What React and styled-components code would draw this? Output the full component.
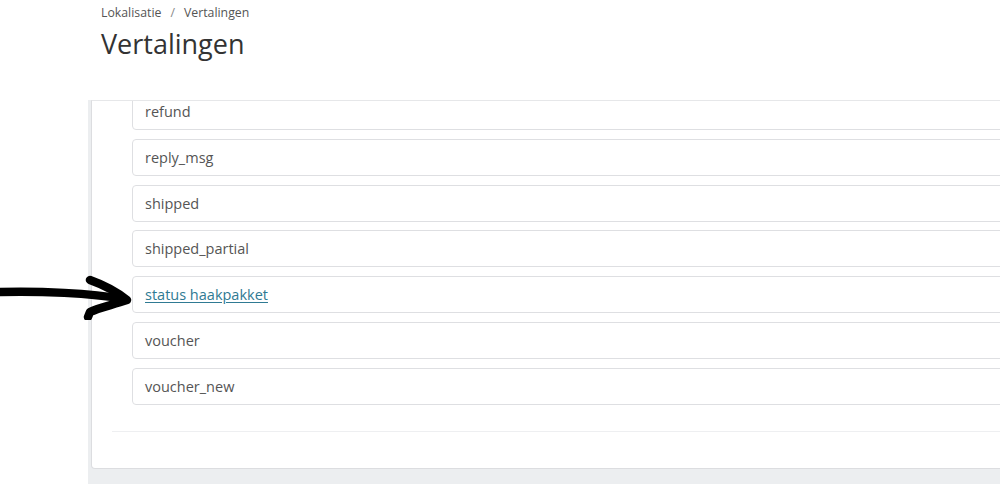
import React from 'react';
import styled, { createGlobalStyle } from 'styled-components';

const Global = createGlobalStyle`
    html, body {
        margin: 0;
        padding: 0;
        background: #ffffff;
        font-family: "Open Sans", "Liberation Sans", sans-serif;
        overflow: hidden;
    }
`;

const keys = ['refund', 'reply_msg', 'shipped', 'shipped_partial', 'status haakpakket', 'voucher', 'voucher_new'];
const linked = 'status haakpakket';

const App = () =>{
    return(
        <Page>
            <Global />
            <Header>
                <Crumbs>
                    <Crumb>Lokalisatie</Crumb>
                    <Sep>/</Sep>
                    <Crumb>Vertalingen</Crumb>
                </Crumbs>
                <Title>Vertalingen</Title>
            </Header>
            <Content>
                <Sidebar />
                <Main>
                    <Card>
                        <List>
                            {keys.map(k => (
                                <Row key={k}>
                                    {k === linked ? <KeyLink href="#">{k}</KeyLink> : k}
                                </Row>
                            ))}
                        </List>
                        <Divider />
                    </Card>
                </Main>
            </Content>
            <Arrow viewBox="0 0 135 50" width="135" height="50">
                <path d="M0 22 C40 21 90 23 124 29" fill="none" stroke="#000" strokeWidth="8.5" strokeLinecap="round" />
                <path d="M90 10 C104 15 117 22 127 30 C112 35 98 38 90 42 L88 47" fill="none" stroke="#000" strokeWidth="8.5" strokeLinecap="round" strokeLinejoin="round" />
            </Arrow>
        </Page>
    );
}

const Page = styled.div`
    position: relative;
    width: 1000px;
    height: 484px;
    overflow: hidden;
`;
const Header = styled.header`
    height: 100px;
    padding: 4px 0 0 101px;
    box-sizing: border-box;
`;
const Crumbs = styled.div`
    display: flex;
    align-items: center;
    gap: 8px;
    font-size: 12.3px;
    color: #555;
    line-height: 18px;
`;
const Crumb = styled.span``;
const Sep = styled.span`
    color: #888;
    padding: 0 1px;
`;
const Title = styled.h1`
    margin: 3px 0 0;
    font-size: 27px;
    font-weight: 400;
    color: #333;
    line-height: 38px;
`;
const Content = styled.div`
    display: flex;
    height: 384px;
`;
const Sidebar = styled.div`
    width: 88px;
    flex: none;
    background: #fff;
`;
const Main = styled.div`
    flex: 1;
    background: #eceef0;
    padding: 0 0 15px 3px;
    box-sizing: border-box;
    min-width: 0;
`;
const Card = styled.div`
    height: 100%;
    margin-right: -20px;
    background: #fff;
    border: 1px solid #dcdde0;
    border-top-color: #e6e7e9;
    border-radius: 0 0 4px 4px;
    box-sizing: border-box;
    overflow: hidden;
    padding: 0 0 0 20px;
`;
const List = styled.div`
    display: flex;
    flex-direction: column;
    gap: 8.8px;
    margin-top: -8px;
    padding-left: 20px;
`;
const Row = styled.div`
    height: 37px;
    box-sizing: border-box;
    border: 1px solid #dedfe2;
    border-radius: 4px;
    padding-left: 12px;
    display: flex;
    align-items: center;
    font-size: 14.5px;
    color: #555;
`;
const KeyLink = styled.a`
    color: #2f7a93;
    text-decoration: underline;
    text-underline-offset: 2px;
`;
const Divider = styled.div`
    margin-top: 26px;
    height: 1px;
    background: #eeeff1;
`;
const Arrow = styled.svg`
    position: absolute;
    left: 0;
    top: 270px;
`;

export default App;
